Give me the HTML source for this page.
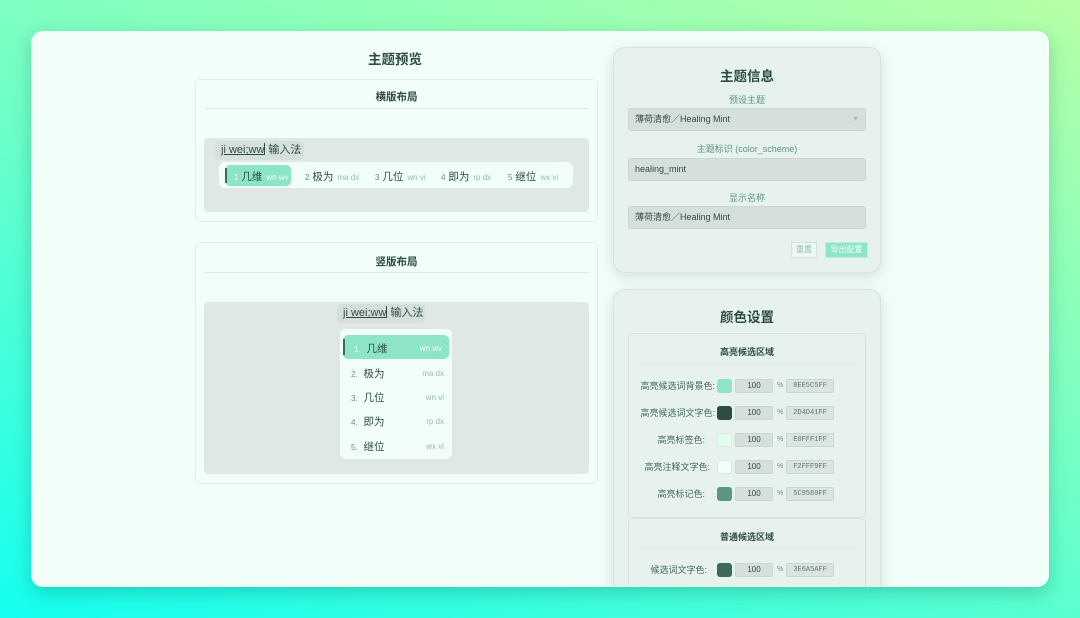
<!DOCTYPE html>
<html><head><meta charset="utf-8"><style>
*{box-sizing:border-box;margin:0;padding:0}
body{width:1080px;height:618px;overflow:hidden;background:linear-gradient(20deg,#14fff0 0%,#6effc8 50%,#b6ffa6 100%);font-family:"Liberation Sans","Noto Sans CJK SC",sans-serif;color:#2d4d41;position:relative}
.win{position:absolute;left:31px;top:31px;width:1018px;height:556px;background:#f2fff9;border-radius:12px;overflow:hidden;box-shadow:0 6px 18px rgba(0,80,70,.25)}
.abs{position:absolute}
.h{font-weight:bold;text-align:center}
.card{position:absolute;border:1px solid #dfeee6;border-radius:5px}
.div{position:absolute;height:1px;background:#dbe9e2}
.gray{position:absolute;background:#e0e8e3;border-radius:4px}
.pre{position:absolute;background:#d6e0db;border-radius:4px;font-size:11px;line-height:19px;padding-left:6px;color:#2d4d41}
.pre u{text-decoration:underline}
.cur{display:inline-block;width:1px;height:12px;background:#2d4d41;vertical-align:-2px;margin-right:3px}
.c{position:absolute;font-size:10.5px;white-space:nowrap}
.c i{font-style:normal;font-size:8px;color:#5c9580}
.c b{font-weight:normal;font-size:8px;color:#8fbfae;margin-left:4px}
.panel{position:absolute;left:582px;width:268px;background:#e8f2ec;border:1px solid #d7e4dd;border-radius:12px;box-shadow:0 4px 14px rgba(0,60,40,.15)}
.lbl{position:absolute;left:0;width:100%;text-align:center;font-size:9px;color:#5c9580}
.inp{position:absolute;left:14px;width:238px;height:23px;background:#d6e0db;border:1px solid #cbd6d0;border-radius:3px;font-size:9px;line-height:21px;padding-left:6px;color:#2d4d41}
.row{position:absolute;left:0;height:14px;width:236px}
.row .l{position:absolute;right:150px;top:0;font-size:9px;line-height:14px;color:#3e6a5a;white-space:nowrap}
.row .sw{position:absolute;left:88px;top:0;width:15px;height:14px;border-radius:3px}
.row .n{position:absolute;left:106px;top:0;width:38px;height:14px;background:#d6e0db;border:1px solid #cbd6d0;border-radius:2px;font-size:8px;text-align:center;line-height:12px}
.row .p{position:absolute;left:148px;top:0;font-size:7px;color:#5c9580;line-height:14px}
.row .x{position:absolute;left:157px;top:0;width:48px;height:14px;background:#dbe5e0;border:1px solid #cbd6d0;border-radius:2px;font-family:"Liberation Mono",monospace;font-size:7px;text-align:center;line-height:12px;color:#5c7a6e}
</style></head><body>
<div class="win">
 <div class="abs h" style="left:164px;top:17px;width:400px;font-size:13.5px">主题预览</div>
 <div class="card" style="left:164px;top:48px;width:403px;height:143px">
  <div class="abs h" style="left:0;top:9px;width:100%;font-size:10.5px">横版布局</div>
  <div class="div" style="left:9px;top:28px;width:384px"></div>
  <div class="gray" style="left:8px;top:58px;width:385px;height:74px">
   <div class="pre" style="left:11px;top:3px;width:89px;height:19px"><u>ji wei;ww</u><span class="cur"></span>输入法</div>
   <div class="abs" style="left:15px;top:24px;width:354px;height:26px;background:#f2fff9;border-radius:6px">
    <div class="abs" style="left:6px;top:3px;width:66px;height:21px;background:#8ee5c5;border-radius:5px"></div>
    <div class="abs" style="left:6px;top:6px;width:2px;height:15px;background:#3e6a5a"></div>
    <div class="c" style="left:15px;top:7px;color:#2d4d41"><i style="color:#f2fff9">1</i> 几维<b style="color:#f2fff9">wn wv</b></div>
    <div class="c" style="left:86px;top:7px"><i>2</i> 极为<b>ma dx</b></div>
    <div class="c" style="left:156px;top:7px"><i>3</i> 几位<b>wn vi</b></div>
    <div class="c" style="left:222px;top:7px"><i>4</i> 即为<b>rp dx</b></div>
    <div class="c" style="left:289px;top:7px"><i>5</i> 继位<b>wx vi</b></div>
   </div>
  </div>
 </div>
 <div class="card" style="left:164px;top:211px;width:403px;height:242px">
  <div class="abs h" style="left:0;top:11px;width:100%;font-size:10.5px">竖版布局</div>
  <div class="div" style="left:9px;top:29px;width:384px"></div>
  <div class="gray" style="left:8px;top:59px;width:385px;height:172px">
   <div class="pre" style="left:133px;top:2px;width:88px;height:19px"><u>ji wei;ww</u><span class="cur"></span>输入法</div>
   <div class="abs" style="left:136px;top:27px;width:112px;height:130px;background:#f2fff9;border-radius:6px">
    <div class="abs" style="left:3px;top:6px;width:106px;height:24px;background:#8ee5c5;border-radius:5px"></div>
    <div class="abs" style="left:3px;top:10px;width:2px;height:16px;background:#3e6a5a"></div>
    <div class="c" style="left:14px;top:12px"><i style="color:#f2fff9">1.</i>&nbsp; 几维</div><div class="c" style="right:10px;top:13px"><b style="color:#f2fff9">wn wv</b></div>
    <div class="c" style="left:11px;top:37px"><i>2.</i>&nbsp; 极为</div><div class="c" style="right:8px;top:38px"><b>ma dx</b></div>
    <div class="c" style="left:11px;top:61px"><i>3.</i>&nbsp; 几位</div><div class="c" style="right:8px;top:62px"><b>wn vi</b></div>
    <div class="c" style="left:11px;top:85px"><i>4.</i>&nbsp; 即为</div><div class="c" style="right:8px;top:86px"><b>rp dx</b></div>
    <div class="c" style="left:11px;top:110px"><i>5.</i>&nbsp; 继位</div><div class="c" style="right:8px;top:111px"><b>wx vi</b></div>
   </div>
  </div>
 </div>
 <div class="panel" style="top:16px;height:226px">
  <div class="abs h" style="left:0;top:17px;width:100%;font-size:13.5px">主题信息</div>
  <div class="lbl" style="top:45px">预设主题</div>
  <div class="inp" style="top:60px">薄荷清愈／Healing Mint<span style="position:absolute;right:6px;color:#8fbfae;font-size:7px">▼</span></div>
  <div class="lbl" style="top:94px">主题标识 (color_scheme)</div>
  <div class="inp" style="top:110px">healing_mint</div>
  <div class="lbl" style="top:143px">显示名称</div>
  <div class="inp" style="top:158px">薄荷清愈／Healing Mint</div>
  <div class="abs" style="left:177px;top:194px;width:26px;height:16px;border:1px solid #d6e0db;background:#eef7f2;font-size:8px;color:#8fbfae;text-align:center;line-height:14px">重置</div>
  <div class="abs" style="left:211px;top:194px;width:43px;height:16px;background:#8ee5c5;border:1px solid #b8f0dc;font-size:8px;color:#f2fff9;text-align:center;line-height:14px">导出配置</div>
 </div>
 <div class="panel" style="top:258px;height:320px">
  <div class="abs h" style="left:0;top:16px;width:100%;font-size:13.5px">颜色设置</div>
  <div class="abs" style="left:14px;top:43px;width:238px;height:185px;border:1px solid #d7e4dd;border-radius:5px">
   <div class="abs h" style="left:0;top:11px;width:100%;font-size:9px">高亮候选区域</div>
   <div class="div" style="left:10px;top:29px;width:216px"></div>
   <div class="row" style="top:45px"><span class="l">高亮候选词背景色:</span><span class="sw" style="background:#8ee5c5"></span><span class="n">100</span><span class="p">%</span><span class="x">8EE5C5FF</span></div>
   <div class="row" style="top:72px"><span class="l">高亮候选词文字色:</span><span class="sw" style="background:#2d4d41"></span><span class="n">100</span><span class="p">%</span><span class="x">2D4D41FF</span></div>
   <div class="row" style="top:99px"><span class="l" style="right:160px">高亮标签色:</span><span class="sw" style="background:#e0fff1;border:1px solid #d6ebe0"></span><span class="n">100</span><span class="p">%</span><span class="x">E0FFF1FF</span></div>
   <div class="row" style="top:126px"><span class="l" style="right:155px">高亮注释文字色:</span><span class="sw" style="background:#f2fff9;border:1px solid #d6ebe0"></span><span class="n">100</span><span class="p">%</span><span class="x">F2FFF9FF</span></div>
   <div class="row" style="top:153px"><span class="l" style="right:160px">高亮标记色:</span><span class="sw" style="background:#5c9580"></span><span class="n">100</span><span class="p">%</span><span class="x">5C9580FF</span></div>
  </div>
  <div class="abs" style="left:14px;top:228px;width:238px;height:120px;border:1px solid #d7e4dd;border-radius:5px">
   <div class="abs h" style="left:0;top:11px;width:100%;font-size:9px">普通候选区域</div>
   <div class="div" style="left:10px;top:28px;width:216px"></div>
   <div class="row" style="top:44px"><span class="l" style="right:158px">候选词文字色:</span><span class="sw" style="background:#3e6a5a"></span><span class="n">100</span><span class="p">%</span><span class="x">3E6A5AFF</span></div>
  </div>
 </div>
</div>
</body></html>
